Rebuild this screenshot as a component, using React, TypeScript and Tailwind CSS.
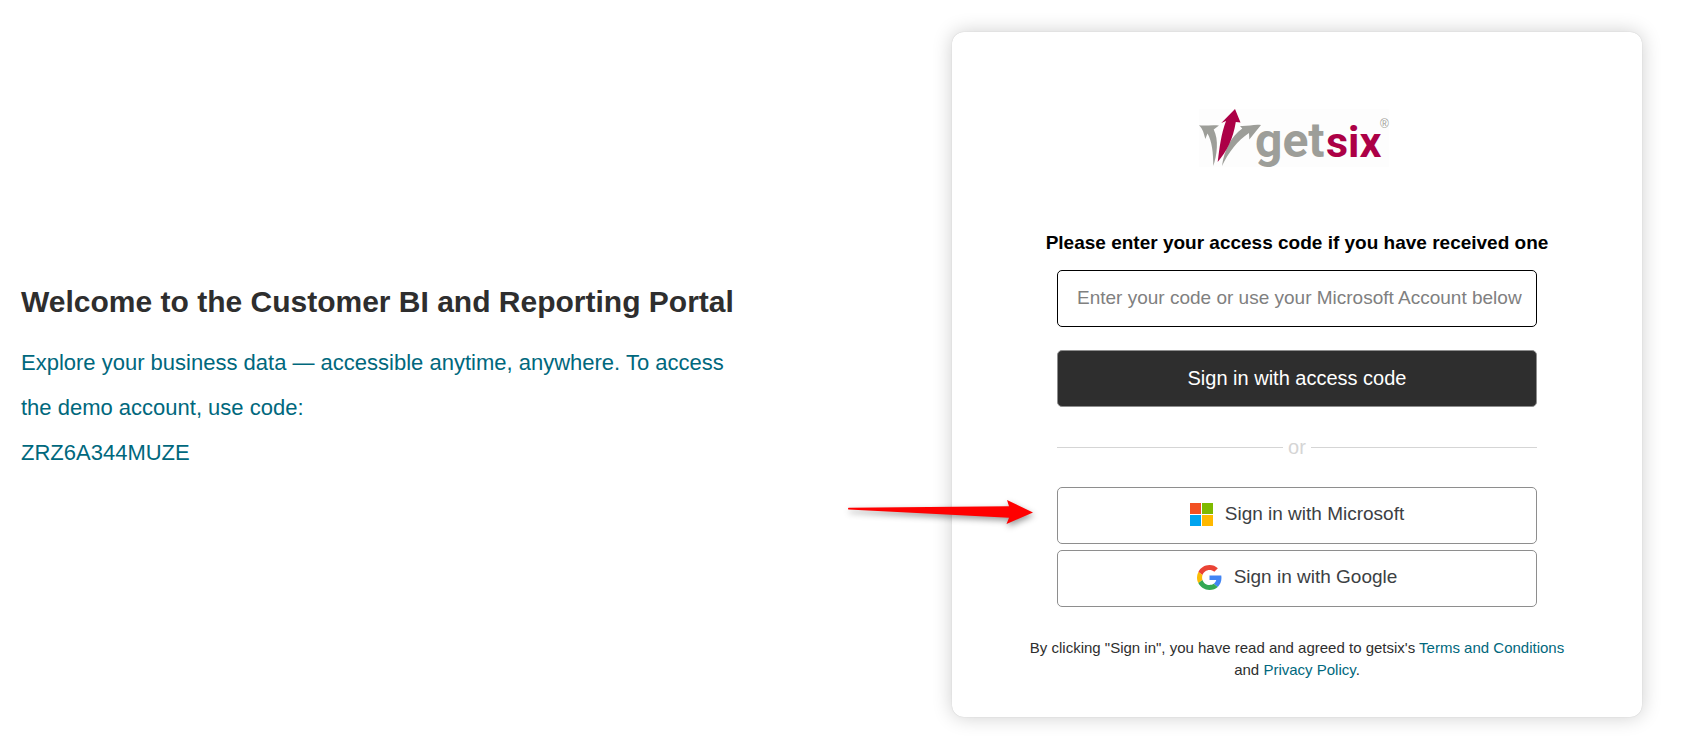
import type { ReactNode } from "react";

function GetsixLogo() {
  return (
    <svg
      viewBox="0 0 190 58"
      className="mr-[6px] h-[58px] w-[190px] overflow-visible bg-[#fdfdfd]"
      role="img"
      aria-label="getsix"
    >
      <path
        fill="#9d9e99"
        d="M0 16.3C7 17 13 15.500 20 16.500L14.700 20.500C20 31 18 46 14.300 57C14.300 44 13 32 8.500 24.500L6.300 30C5 25 4 20 0 16.300Z"
      />
      <path
        fill="#9d9e99"
        d="M62 16L50.300 30.500L50 24C39 31 29 44 23 57C25 42 32 27 43.300 19.500L41 17C49 17.500 55 15 62 16Z"
      />
      <path
        fill="#ac0046"
        d="M36 0L41.500 13.500L36.800 13C34 30 28 42 18.700 53C20.500 39 22 25 27 12L22.300 14Z"
      />
      <g fontFamily="Roboto, sans-serif" fontWeight="700">
        <text x="56" y="48" fill="#9d9e99" fontSize="48">
          get
        </text>
        <text x="127" y="48" fill="#ac0046" fontSize="43">
          six
        </text>
      </g>
      <text
        x="181"
        y="19"
        fill="#9d9e99"
        fontFamily="Liberation Sans, sans-serif"
        fontSize="12"
      >
        ®
      </text>
    </svg>
  );
}

function MicrosoftIcon() {
  return (
    <svg viewBox="0 0 23 23" className="size-[23px]" aria-hidden="true">
      <path fill="#f25022" d="M0 0h11v11H0z" />
      <path fill="#7fba00" d="M12 0h11v11H12z" />
      <path fill="#00a4ef" d="M0 12h11v11H0z" />
      <path fill="#ffb900" d="M12 12h11v11H12z" />
    </svg>
  );
}

function GoogleIcon() {
  return (
    <svg viewBox="0 0 48 48" className="size-[25px]" aria-hidden="true">
      <path
        fill="#ea4335"
        d="M24 9.5c3.54 0 6.71 1.22 9.21 3.6l6.85-6.85C35.9 2.38 30.47 0 24 0 14.62 0 6.51 5.38 2.56 13.22l7.98 6.19C12.43 13.72 17.74 9.5 24 9.5z"
      />
      <path
        fill="#4285f4"
        d="M46.98 24.55c0-1.57-.15-3.09-.38-4.55H24v9.02h12.94c-.58 2.96-2.26 5.48-4.78 7.18l7.73 6c4.51-4.18 7.09-10.36 7.09-17.65z"
      />
      <path
        fill="#fbbc05"
        d="M10.53 28.59c-.48-1.45-.76-2.99-.76-4.59s.27-3.14.76-4.59l-7.98-6.19C.92 16.46 0 20.12 0 24c0 3.88.92 7.54 2.56 10.78l7.97-6.19z"
      />
      <path
        fill="#34a853"
        d="M24 48c6.48 0 11.93-2.13 15.89-5.81l-7.73-6c-2.15 1.45-4.92 2.3-8.16 2.3-6.26 0-11.57-4.22-13.47-9.91l-7.98 6.19C6.51 42.62 14.62 48 24 48z"
      />
    </svg>
  );
}

function PointerArrow() {
  return (
    <svg
      viewBox="0 0 185 24"
      className="pointer-events-none absolute top-[13px] right-full mr-6 h-6 w-[185px] overflow-visible drop-shadow-[1px_3px_3px_rgba(0,0,0,0.4)]"
      aria-hidden="true"
    >
      <path
        fill="#ff0000"
        d="M0.500 7.800L161 6.200L159 0L185 12.500L158.500 24L161 17.800L0.500 9.500Q-0.500 8.600 0.500 7.800Z"
      />
    </svg>
  );
}

interface ProviderButtonProps {
  icon: ReactNode;
  label: string;
}

function ProviderButton({ icon, label }: ProviderButtonProps) {
  return (
    <button
      type="button"
      className="flex h-[57px] w-full items-center justify-center gap-3 rounded-[5px] border border-[#8e8e8e] bg-white pb-[2px] text-[19px] text-[#3c4043]"
    >
      {icon}
      {label}
    </button>
  );
}

function Divider() {
  return (
    <div className="flex items-center gap-[5px] text-xl leading-6 text-[#d5d5d5]">
      <span className="h-px flex-1 bg-[#d5d5d5]" />
      or
      <span className="h-px flex-1 bg-[#d5d5d5]" />
    </div>
  );
}

function Welcome() {
  return (
    <section className="max-w-[744px] pt-2">
      <h1 className="text-3xl leading-10 font-bold text-[#2e2e2e]">
        Welcome to the Customer BI and Reporting Portal
      </h1>
      <p className="mt-[18px] text-[22px] leading-[45px] text-[#00687d]">
        Explore your business data — accessible anytime, anywhere. To access
        <br />
        the demo account, use code:
        <br />
        ZRZ6A344MUZE
      </p>
    </section>
  );
}

function SignInCard() {
  return (
    <section className="flex w-[690px] shrink-0 flex-col items-center rounded-xl bg-white px-[70px] pt-[77px] pb-9 shadow-[0_0_1px_rgba(0,0,0,0.2),0_0_20px_rgba(0,0,0,0.2)]">
      <GetsixLogo />
      <form
        className="mt-16 flex w-[480px] flex-col items-center"
        onSubmit={(e) => e.preventDefault()}
      >
        <label
          htmlFor="access-code"
          className="text-[19px] leading-6 font-bold whitespace-nowrap text-black"
        >
          Please enter your access code if you have received one
        </label>
        <input
          id="access-code"
          type="text"
          placeholder="Enter your code or use your Microsoft Account below"
          className="mt-[15px] h-[57px] w-full rounded-[5px] border border-black pr-2 pb-[2px] pl-[19px] text-[19px] placeholder:text-[#808080]"
        />
        <button
          type="submit"
          className="mt-[23px] h-[57px] w-full rounded-[5px] border border-[#8e8e8e] bg-[#2e2e2e] pb-[2px] text-xl text-white"
        >
          Sign in with access code
        </button>
      </form>
      <div className="mt-7 w-[480px]">
        <Divider />
        <div className="relative mt-7">
          <PointerArrow />
          <ProviderButton
            icon={<MicrosoftIcon />}
            label="Sign in with Microsoft"
          />
        </div>
        <div className="mt-[6px]">
          <ProviderButton icon={<GoogleIcon />} label="Sign in with Google" />
        </div>
      </div>
      <p className="mt-[30px] text-center text-[15px] leading-[22px] text-[#2e2e2e]">
        By clicking "Sign in", you have read and agreed to getsix's{" "}
        <a href="#terms" className="text-[#00687d]">
          Terms and Conditions
        </a>{" "}
        and{" "}
        <a href="#privacy" className="text-[#00687d]">
          Privacy Policy
        </a>
        .
      </p>
    </section>
  );
}

export default function App() {
  return (
    <main className="flex min-h-screen items-center justify-between gap-10 bg-white pr-[58px] pl-[21px] font-['Liberation_Sans',Arial,sans-serif]">
      <Welcome />
      <SignInCard />
    </main>
  );
}
